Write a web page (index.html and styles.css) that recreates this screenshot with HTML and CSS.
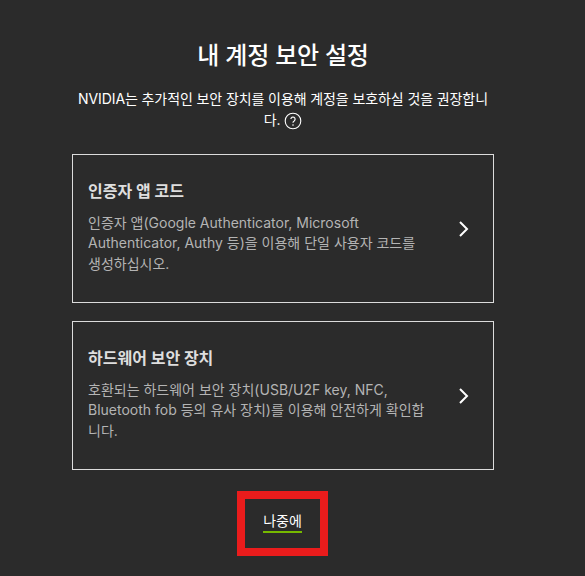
FILE: index.html
```html
<!DOCTYPE html>
<html lang="ko">
<head>
  <meta charset="UTF-8" />
  <title>내 계정 보안 설정</title>
  <link rel="stylesheet" href="styles.css">
</head>
<body>
  <main class="panel">
    <h1 class="heading">내 계정 보안 설정</h1>
    <p class="intro">NVIDIA는 추가적인 보안 장치를 이용해 계정을 보호하실 것을 권장합니다.
      <svg class="help" viewBox="0 0 18 18" aria-hidden="true">
        <circle cx="9" cy="9" r="7.8" fill="none" stroke="#fff" stroke-width="1.1"/>
        <path d="M6.9 7.1a2.1 2.1 0 1 1 3.3 1.8c-.8.5-1.2.9-1.2 1.8" fill="none" stroke="#fff" stroke-width="1.2"/>
        <circle cx="9" cy="13" r=".8" fill="#fff"/>
      </svg>
    </p>

    <a class="option" href="#">
      <div class="option-text">
        <h2 class="option-title">인증자 앱 코드</h2>
        <p class="option-desc">인증자 앱(Google Authenticator, Microsoft Authenticator, Authy 등)을 이용해 단일 사용자 코드를 생성하십시오.</p>
      </div>
      <svg class="chevron" viewBox="0 0 12 18" aria-hidden="true"><path d="M2 2l7 7-7 7" fill="none" stroke="#fff" stroke-width="2"/></svg>
    </a>

    <a class="option" href="#">
      <div class="option-text">
        <h2 class="option-title">하드웨어 보안 장치</h2>
        <p class="option-desc">호환되는 하드웨어 보안 장치(USB/U2F key, NFC, Bluetooth fob 등의 유사 장치)를 이용해 안전하게 확인합니다.</p>
      </div>
      <svg class="chevron" viewBox="0 0 12 18" aria-hidden="true"><path d="M2 2l7 7-7 7" fill="none" stroke="#fff" stroke-width="2"/></svg>
    </a>

    <div class="later-box">
      <a class="later" href="#">나중에</a>
    </div>
  </main>
</body>
</html>
```

FILE: styles.css
```css
html, body {
  height: 100%;
}
body {
  background: #2b2b2b;
  color: #fff;
  font-family: Inter, "Noto Sans CJK KR", sans-serif;
  margin: 0;
  overflow: hidden;
}
.panel {
  width: 422px;
  margin-left: 72px;
  padding-top: 40px;
  display: flex;
  flex-direction: column;
  align-items: stretch;
}
.heading {
  font-size: 24px;
  line-height: 32px;
  font-weight: 500;
  letter-spacing: -0.25px;
  text-align: center;
  margin: 0 0 16px;
}
.intro {
  font-size: 14px;
  line-height: 21px;
  letter-spacing: -0.1px;
  text-align: center;
  margin: 0 0 24px;
}
.help {
  width: 18px;
  height: 18px;
  vertical-align: -5px;
}
.option {
  display: flex;
  align-items: center;
  height: 149px;
  box-sizing: border-box;
  border: 1px solid #dcdcdc;
  padding: 0 23px 0 15px;
  margin-bottom: 18px;
  color: inherit;
  text-decoration: none;
}
.option-text {
  flex: 1;
  padding-bottom: 3px;
}
.option-title {
  font-size: 16px;
  line-height: 22px;
  font-weight: 700;
  color: #dedede;
  margin: 0 0 11px;
}
.option-desc {
  font-size: 14px;
  line-height: 20.5px;
  color: #b4b4b4;
  margin: 0;
  max-width: 339px;
}
.chevron {
  width: 12px;
  height: 18px;
}
.later-box {
  align-self: flex-start;
  width: 91px;
  height: 65px;
  box-sizing: border-box;
  border: 8px solid #ea1c1c;
  margin: 3px 0 0 165px;
  padding-bottom: 4px;
  display: flex;
  align-items: center;
  justify-content: center;
}
.later {
  color: #fff;
  font-size: 14px;
  line-height: 20px;
  text-decoration: none;
  border-bottom: 2px solid #76b900;
}
```
